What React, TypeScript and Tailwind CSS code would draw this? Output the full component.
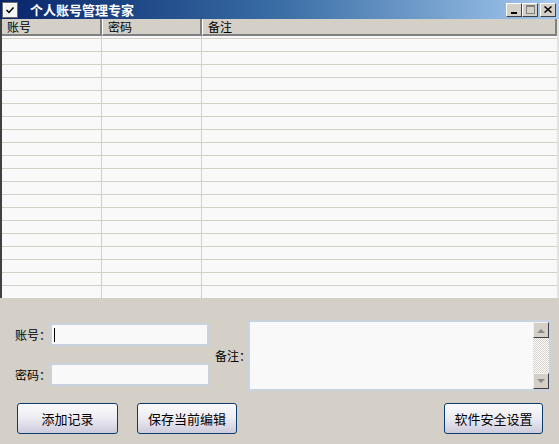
import React from "react";

const font = { fontFamily: '"Noto Sans CJK SC", "Noto Sans", sans-serif' };

const rows = Array.from({ length: 20 }, (_, i) => i);

const TitleButton = ({ children }: { children: React.ReactNode }) => (
  <div className="flex h-[14px] w-[16px] items-center justify-center border-t border-l border-t-white border-l-white border-r border-b border-r-[#404040] border-b-[#404040] bg-[#d4d0c8]">
    {children}
  </div>
);

const ScrollButton = ({ up }: { up?: boolean }) => (
  <div className="flex h-[16px] w-[16px] shrink-0 items-center justify-center border-t border-l border-t-[#f0f0f0] border-l-[#f0f0f0] border-r border-b border-r-[#404040] border-b-[#404040] bg-[#d4d0c8]">
    <svg width="8" height="5" viewBox="0 0 8 5">
      {up ? <path d="M0 5 L4 1 L8 5 Z" fill="#8a8a8a" /> : <path d="M0 0 L4 4 L8 0 Z" fill="#8a8a8a" />}
    </svg>
  </div>
);

const XpButton = ({ label, width }: { label: string; width: string }) => (
  <button
    className={`flex h-[31px] ${width} items-center justify-center whitespace-nowrap rounded-[3px] border border-[#0a3d6e] bg-gradient-to-b from-[#fbfbfb] via-[#ecebf2] to-[#cdcbdc] text-[13px] leading-none text-black`}
  >
    {label}
  </button>
);

export default function App() {
  return (
    <div className="flex h-[444px] w-[559px] flex-col overflow-hidden bg-[#d4d0c8]" style={font}>
      {/* title bar */}
      <div className="flex h-[19px] shrink-0 items-center bg-gradient-to-r from-[#0a246a] via-[#3a6ea5] to-[#a6caf0] pl-[2px] pr-[3px]">
        <div className="flex h-[16px] w-[16px] items-center justify-center border border-[#6a6a6a] bg-[#f4f4f4] shadow-[inset_1px_1px_0_#ffffff]">
          <svg width="10" height="8" viewBox="0 0 10 8">
            <path d="M1.5 4 L4 6.5 L8.5 1.5" stroke="#000" strokeWidth="1.5" fill="none" />
          </svg>
        </div>
        <span className="ml-[12px] whitespace-nowrap text-[13px] font-bold leading-none text-white">个人账号管理专家</span>
        <div className="ml-auto flex items-center">
          <TitleButton>
            <div className="mt-[6px] h-[2px] w-[6px] bg-black" />
          </TitleButton>
          <TitleButton>
            <div className="h-[9px] w-[9px] border border-[#808080] border-t-2" />
          </TitleButton>
          <div className="ml-[2px]">
            <TitleButton>
              <svg width="8" height="7" viewBox="0 0 8 7">
                <path d="M0.5 0.5 L7.5 6.5 M7.5 0.5 L0.5 6.5" stroke="#000" strokeWidth="1.5" />
              </svg>
            </TitleButton>
          </div>
        </div>
      </div>

      {/* list view */}
      <div className="flex h-[279px] shrink-0 border-l-2 border-l-[#404040] border-r-2 border-r-[#e4e2dc]">
        <div className="flex flex-1 flex-col bg-[#f9f9f9]">
          <div className="flex h-[17px] shrink-0 bg-[#d4d0c8] text-[12px] leading-none text-black">
            <div className="flex w-[100px] items-center border-r-2 border-r-[#808080] border-b-2 border-b-[#808080] pl-[5px]">账号</div>
            <div className="flex w-[100px] items-center border-l border-l-white border-r-2 border-r-[#808080] border-b-2 border-b-[#808080] pl-[5px]">密码</div>
            <div className="flex flex-1 items-center border-l border-l-white border-r-2 border-r-[#808080] border-b-2 border-b-[#808080] pl-[5px]">备注</div>
          </div>
          <div className="flex flex-1 overflow-hidden">
            <div className="w-[100px] border-r border-r-[#d4d0c8]">
              <div className="h-[2px]" />
              {rows.map((r) => (
                <div key={r} className="h-[13px] border-t border-t-[#d4d0c8]" />
              ))}
            </div>
            <div className="w-[100px] border-r border-r-[#d4d0c8]">
              <div className="h-[2px]" />
              {rows.map((r) => (
                <div key={r} className="h-[13px] border-t border-t-[#d4d0c8]" />
              ))}
            </div>
            <div className="flex-1">
              <div className="h-[2px]" />
              {rows.map((r) => (
                <div key={r} className="h-[13px] border-t border-t-[#d4d0c8]" />
              ))}
            </div>
          </div>
        </div>
      </div>

      {/* form */}
      <div className="flex flex-1 flex-col px-[15px] pt-[22px] text-[12px] leading-none text-black">
        <div className="flex">
          <div className="mt-[3px] flex shrink-0 flex-col gap-[17px]">
            <div className="flex items-center">
              <span className="w-[35px] shrink-0 whitespace-nowrap">账号：</span>
              <div className="flex h-[23px] w-[159px] items-center border-2 border-[#c9d3e0] bg-[#f9f9f9] pl-[2px]">
                <div className="h-[14px] w-px bg-black" />
              </div>
            </div>
            <div className="flex items-center">
              <span className="w-[35px] shrink-0 whitespace-nowrap">密码：</span>
              <div className="h-[23px] w-[160px] border-2 border-[#c9d3e0] bg-[#f9f9f9]" />
            </div>
          </div>
          <div className="ml-[5px] flex shrink-0 items-center">
            <span className="w-[33px] whitespace-nowrap">备注：</span>
          </div>
          <div className="flex h-[71px] w-[303px] shrink-0 border-2 border-[#c9d3e0] bg-[#f9f9f9]">
            <div className="flex-1" />
            <div className="flex w-[16px] flex-col bg-[repeating-conic-gradient(#d4d0c8_0%_25%,#ffffff_0%_50%)] bg-[length:2px_2px]">
              <ScrollButton up />
              <div className="flex-1" />
              <ScrollButton />
            </div>
          </div>
        </div>
        <div className="mt-[12px] flex pl-[2px]">
          <XpButton label="添加记录" width="w-[101px]" />
          <div className="ml-[19px]">
            <XpButton label="保存当前编辑" width="w-[100px]" />
          </div>
          <div className="ml-auto mr-[1px]">
            <XpButton label="软件安全设置" width="w-[99px]" />
          </div>
        </div>
      </div>
    </div>
  );
}
